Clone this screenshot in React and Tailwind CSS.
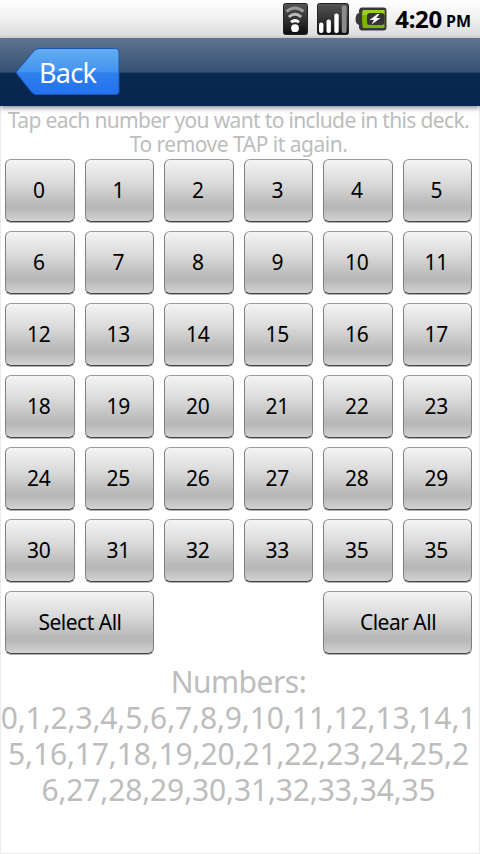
import React, { useState } from 'react';

const keys = [
  '0', '1', '2', '3', '4', '5',
  '6', '7', '8', '9', '10', '11',
  '12', '13', '14', '15', '16', '17',
  '18', '19', '20', '21', '22', '23',
  '24', '25', '26', '27', '28', '29',
  '30', '31', '32', '33', '35', '35',
];

const allNumbers = Array.from({ length: 36 }, (_, i) => i);

const StatusBar = () => (
  <div className="h-[38px] shrink-0 flex items-center justify-end pr-[9px] bg-gradient-to-b from-white via-[#f0f0f0] to-[#dadada]">
    {/* Wifi */}
    <svg width="25" height="32" viewBox="0 0 25 32" className="mr-[9px]">
      <defs>
        <linearGradient id="dark" x1="0" y1="0" x2="0" y2="1">
          <stop offset="0" stopColor="#555" />
          <stop offset="0.5" stopColor="#333" />
          <stop offset="1" stopColor="#0c0c0c" />
        </linearGradient>
      </defs>
      <rect x="0.5" y="0.5" width="24" height="31" rx="2" fill="url(#dark)" stroke="#222" />
      <g fill="none" strokeWidth="3">
        <path d="M3.5 8.5Q12 1.500 20.500 8.500" stroke="#999" />
        <path d="M5.800 14Q12 8.500 18.200 14" stroke="#bbb" />
        <path d="M8 19.200Q12 16 16 19.200" stroke="#fff" />
      </g>
      <circle cx="12" cy="25.200" r="3.900" fill="#fff" />
    </svg>
    {/* Signal */}
    <svg width="32" height="32" viewBox="0 0 32 32" className="mr-[6px]">
      <rect x="0.5" y="0.5" width="31" height="31" rx="2" fill="url(#dark)" stroke="#222" />
      <rect x="2" y="19.500" width="4.400" height="10.500" rx="2" fill="#fff" />
      <rect x="9.500" y="16.500" width="4.400" height="13.500" rx="2" fill="#fff" />
      <rect x="17.300" y="10.500" width="4.400" height="19.500" rx="2" fill="#fff" />
      <rect x="24.800" y="2.500" width="4.800" height="27.500" rx="2" fill="#8c8c8c" />
    </svg>
    {/* Battery */}
    <svg width="32" height="24" viewBox="0 0 32 24" className="mr-[8px]">
      <path d="M7 .5h21.500q3 0 3 3v17q0 3-3 3H7q-2.500 0-3-3V18L2 17Q.5 15 .5 12T2 7l2-1V3.500Q4.500.5 7 .5z" fill="#383838" />
      <path d="M8 3H29.500v18H8Q6 12 8 3z" fill="#7cb305" />
      <path d="M8 3H29.500v5H7Q7 5 8 3z" fill="#9ad01e" />
      <rect x="12" y="6" width="17.500" height="12" rx="3" fill="#333" />
      <path d="M22.500 7L14.500 13h4.500l-2.500 4.500 9-6.500h-4.300l3.300-4z" fill="#fff" />
    </svg>
    <span className="text-[24px] leading-[38px] font-bold text-black tracking-[-0.3px]">4:20</span>
    <span className="ml-[4px] pt-[4px] text-[16px] leading-[34px] font-bold text-black">PM</span>
  </div>
);

const Header = () => (
  <div className="relative h-[68px] shrink-0 bg-[linear-gradient(to_bottom,#5f7490_0%,#355072_50%,#0a2950_52%,#06264f_100%)] shadow-[0_2px_5px_rgba(0,0,0,0.45)] pl-[16px] pt-[10px]">
    <button className="relative block w-[104px] h-[48px]">
      <svg width="104" height="48" viewBox="0 0 104 48" className="absolute inset-0">
        <defs>
          <linearGradient id="tag" x1="0" y1="0" x2="0" y2="1">
            <stop offset="0" stopColor="#64aef4" />
            <stop offset="0.5" stopColor="#4493ee" />
            <stop offset="0.53" stopColor="#2f80ec" />
            <stop offset="1" stopColor="#2470ee" />
          </linearGradient>
        </defs>
        <path
          d="M23 0.500H99Q103 0.500 103 5V44Q103 46.500 100 46.500H20Q17.500 46.500 15 43.500L0.700 25.500Q0 24.500 0.700 23.500L17 4Q20 0.500 23 0.500Z"
          fill="url(#tag)"
          stroke="#1d55b5"
        />
      </svg>
      <span className="relative block pl-[23px] text-left text-[27px] leading-[50px] tracking-[-0.7px] text-white">Back</span>
    </button>
  </div>
);

const Key = ({ label, onClick, className = 'pr-[2px] tracking-[-0.3px]' }) => (
  <button
    onClick={onClick}
    className={`h-[63px] rounded-[6px] border border-t-[#9a9a9a] border-x-[#808080] border-b-[#444] bg-[linear-gradient(to_bottom,#f4f4f4_0%,#dadada_38%,#b8b8b8_74%,#b8b8b8_80%,#d2d2d2_100%)] shadow-[0_1px_0_rgba(0,0,0,0.3)] pb-px text-[21px] leading-[60px] text-black ${className}`}
  >
    {label}
  </button>
);

const App = () => {
  const [selected, setSelected] = useState(allNumbers);

  const toggle = (n) => {
    setSelected((prev) =>
      prev.includes(n) ? prev.filter((x) => x !== n) : [...prev, n].sort((a, b) => a - b)
    );
  };

  return (
    <div className="w-[480px] h-[854px] overflow-hidden flex flex-col bg-white font-['Noto_Sans',sans-serif]">
      <StatusBar />
      <Header />

      <main className="flex-1 flex flex-col border-x border-b border-[#ececec]">
        <p className="pt-[2px] pr-[3px] h-[53px] text-center text-[21px] leading-[24px] tracking-[-0.65px] text-[#bdbdbd] whitespace-nowrap">
          Tap each number you want to include in this deck.
          <br />
          <span className="tracking-[-0.5px]">To remove TAP it again.</span>
        </p>

        {/* Number pad */}
        <div className="grid grid-cols-6 gap-x-[10px] gap-y-[9px] pl-[4px] pr-[7px]">
          {keys.map((k, i) => (
            <Key key={i} label={k} onClick={() => toggle(i)} />
          ))}
          <Key
            label="Select All"
            onClick={() => setSelected(allNumbers)}
            className="col-span-2 pl-px tracking-[-0.5px]"
          />
          <Key
            label="Clear All"
            onClick={() => setSelected([])}
            className="col-start-5 col-span-2 pl-px tracking-[-0.5px]"
          />
        </div>

        {/* Selected numbers */}
        <div className="mt-[10px] w-[477px] -ml-px text-center text-[30px] leading-[36px] tracking-[-0.15px] text-[#bdbdbd]">
          <div className="tracking-[-0.5px]">Numbers:</div>
          <div className="break-all">{selected.join(',')}</div>
        </div>
      </main>
    </div>
  );
};

export default App;
